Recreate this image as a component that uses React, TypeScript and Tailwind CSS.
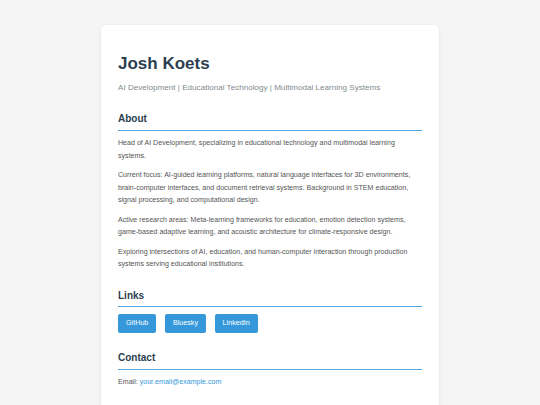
export default function App() {
  const paragraphs = [
    "Head of AI Development, specializing in educational technology and multimodal learning systems.",
    "Current focus: AI-guided learning platforms, natural language interfaces for 3D environments, brain-computer interfaces, and document retrieval systems. Background in STEM education, signal processing, and computational design.",
    "Active research areas: Meta-learning frameworks for education, emotion detection systems, game-based adaptive learning, and acoustic architecture for climate-responsive design.",
    "Exploring intersections of AI, education, and human-computer interaction through production systems serving educational institutions.",
  ];
  const links = ["GitHub", "Bluesky", "LinkedIn"];

  const Heading = ({ children }: { children: string }) => (
    <div>
      <h2 className="pb-[4.5px] text-[10px] font-bold leading-[12px] text-[#2c3e50]">{children}</h2>
      <div className="h-px bg-[#5aa9e0]" />
    </div>
  );

  return (
    <div
      className="min-h-[405px] bg-[#f5f5f5] pt-[25px]"
      style={{ fontFamily: '"Liberation Sans", Arial, sans-serif' }}
    >
      <div className="mx-auto w-[338px] rounded-[5px] bg-white px-[17px] pt-[29px] pb-[30px] shadow-[0_1px_4px_rgba(0,0,0,0.08)]">
        <h1 className="text-[17px] font-bold leading-[20px] text-[#2c3e50]">Josh Koets</h1>
        <p className="mt-[7.7px] text-[8.1px] leading-[12px] text-[#7f8c8d]">
          AI Development | Educational Technology | Multimodal Learning Systems
        </p>

        <section className="mt-[19.5px]">
          <Heading>About</Heading>
          <div className="mt-[6.5px] flex flex-col gap-[6.8px]">
            {paragraphs.map((p) => (
              <p key={p} className="text-[7.1px] leading-[12.6px] text-[#555]">
                {p}
              </p>
            ))}
          </div>
        </section>

        <section className="mt-[19px]">
          <Heading>Links</Heading>
          <div className="mt-[7px] flex gap-[8.5px]">
            {links.map((l) => (
              <a
                key={l}
                className="flex h-[18.5px] items-center rounded-[2px] bg-[#3498db] px-[8px] text-[7.2px] text-white"
              >
                {l}
              </a>
            ))}
          </div>
        </section>

        <section className="mt-[19.5px]">
          <Heading>Contact</Heading>
          <p className="mt-[6px] text-[7.1px] leading-[12.6px] text-[#555]">
            Email: <a className="text-[#3498db]">your.email@example.com</a>
          </p>
        </section>
      </div>
    </div>
  );
}
